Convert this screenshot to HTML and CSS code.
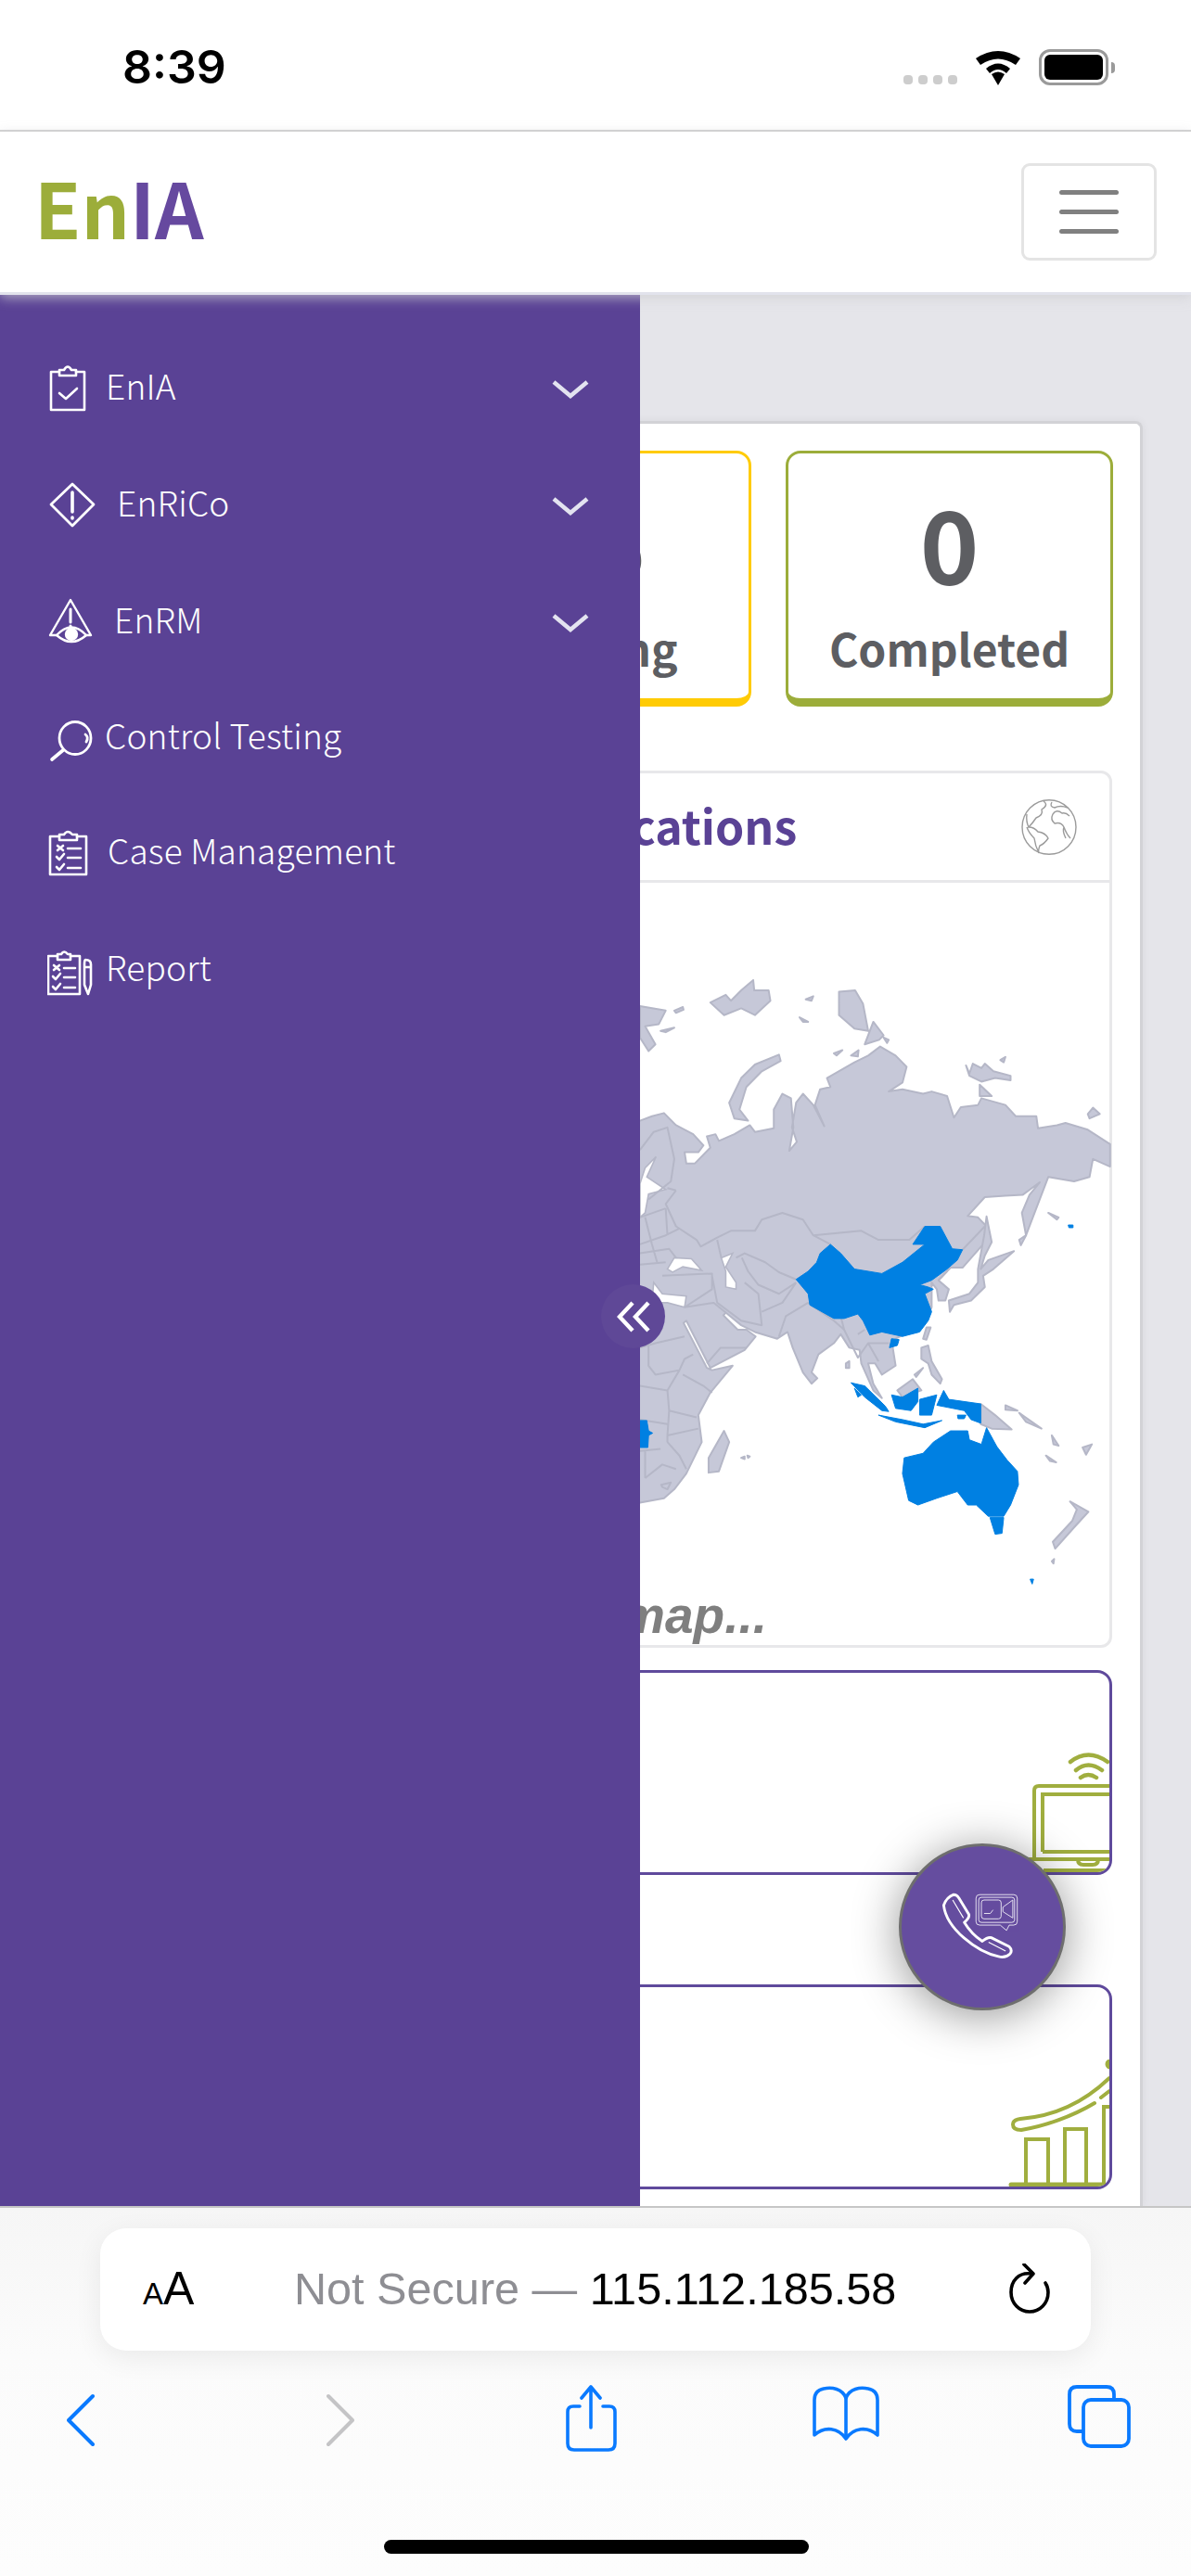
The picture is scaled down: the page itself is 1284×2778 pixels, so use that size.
FILE: index.html
```html
<!DOCTYPE html>
<html lang="en">
<head>
  <meta charset="UTF-8" />
  <title>EnIA</title>
  <meta name="viewport" content="width=device-width, initial-scale=1.0"/>
  <link rel="stylesheet" href="styles.css">
</head>
<body>

<div id="screen">

  <!-- ios status bar -->
  <div class="status-bar">
    <span class="clock">8:39</span>
    <div class="status-icons">
      <div class="signal"><i></i><i></i><i></i><i></i></div>
      <svg class="wifi" width="50" height="38" viewBox="0 0 50 38">
        <path d="M25 38 L18 26 Q25 21 32 26 Z" fill="#000"/>
        <path d="M12 20 Q25 9 38 20 L34 25 Q25 17 16 25 Z" fill="#000"/>
        <path d="M1 9 Q25 -7 49 9 L44 16 Q25 3 6 16 Z" fill="#000"/>
      </svg>
      <div class="battery"><div class="battery-fill"></div></div>
      <div class="battery-nub"></div>
    </div>
  </div>

  <header class="topbar">
    <div class="logo"><span class="logo-en">En</span><span class="logo-ia">IA</span></div>
    <button class="menu-btn"><i></i><i></i><i></i></button>
  </header>

  <main class="page">
    <div class="card">
      <div class="tiles">
        <div class="tile tile-purple"></div>
        <div class="tile tile-yellow"><div class="tile-num">35</div><div class="tile-label">Pending</div></div>
        <div class="tile tile-green"><div class="tile-num">0</div><div class="tile-label">Completed</div></div>
      </div>

      <div class="map-panel">
        <div class="map-head">
          <span class="map-title">Locations</span>
          <svg class="globe" width="60" height="60" viewBox="0 0 60 60" fill="none" stroke="#9b9b9b" stroke-width="1.4">
            <ellipse cx="30" cy="30" rx="29" ry="29.3"/>
            <path d="M24 2 Q30 6 22 11 Q24 17 16 20 Q12 26 8 30 Q14 30 18 35 Q26 36 29 42 Q25 48 20 50 Q18 55 19 58 Q15 50 14 42 Q8 36 6 30 M8 30 Q5 24 6 16"/>
            <path d="M33 3 Q30 8 36 9 Q42 6 50 9 M34 16 Q38 10 44 15 Q48 14 52 18 M34 16 Q31 22 36 26 Q43 24 46 30 Q49 38 53 42 M46 30 Q44 34 48 42"/>
          </svg>
        </div>
        <div class="map-body">
          <svg class="map" width="1131" height="760" viewBox="67 950 1131 760">
            <g transform="translate(640 1020) scale(.36995 .4847)">
              <!-- eurasia and africa -->
              <path class="land" d="M60 385 L135 385 L170 375 L205 368 L240 395 L290 415 L320 440 L305 455 L265 455 L270 480 L295 480 L340 445 L330 420 L355 415 L365 430 L410 415 L455 395 L470 410 L525 402 L525 360 L550 325 L575 335 L582 400 L570 452 L592 432 L578 400 L590 345 L610 325 L640 350 L672 397 L645 350 L660 315 L690 310 L680 290 L760 255 L800 240 L835 220 L880 240 L912 265 L900 300 L860 320 L900 315 L960 325 L985 320 L1030 330 L1050 378 L1070 355 L1120 350 L1130 335 L1200 350 L1230 375 L1290 375 L1295 402 L1350 395 L1375 390 L1440 405 L1505 437 L1505 487 L1455 470 L1445 510 L1400 520 L1325 510 L1300 560 L1260 640 L1248 590 L1270 550 L1300 522 L1250 550 L1200 552 L1140 555 L1090 597 L1120 600 L1145 620 L1135 660 L1075 712 L1040 712 L1005 740 L1035 760 L1025 785 L1005 785 L1000 760 L985 745 L985 800 L960 840 L880 870 L870 882 L880 930 L840 950 L820 925 L800 925 L815 970 L840 1002 L815 985 L780 925 L775 895 L745 890 L720 860 L700 880 L655 905 L635 945 L652 958 L635 970 L610 945 L580 890 L565 855 L535 870 L470 855 L430 840 L385 812 L378 818 L420 850 L445 850 L472 865 L440 895 L340 935 L270 830 L262 835 L330 935 L345 940 L405 930 L340 990 L305 1040 L315 1100 L270 1170 L235 1205 L205 1225 L135 1235 L60 1235 Z"/>
              <!-- seas -->
              <path class="sea" d="M215 715 L235 690 L285 692 L315 718 L260 710 L230 722 Z"/>
              <path class="sea" d="M372 690 L405 680 L385 710 L415 745 L415 760 L385 755 L385 720 Z"/>
              <path class="sea" d="M175 745 L200 770 L270 775 L265 800 L215 790 L170 790 Z"/>
              <path class="sea" d="M135 525 L150 490 L182 465 L155 510 L210 538 L160 548 L150 590 L135 600 Z"/>
              <path class="line" d="M240 540 L210 570 L240 620 L300 650 L312 665 L360 645 L400 630 L470 630 L490 605 L550 590 L610 605 L640 640 L690 660 M640 640 L780 630 L830 650 L920 650 L965 620 M1075 672 L1140 620 M360 650 L372 690 M415 690 L440 680 L500 700 L540 722 L590 738 M432 690 L450 720 L480 750 L540 770 L590 745 M345 730 L360 790 L430 830 L490 840 L480 770 L440 745 M490 810 L550 790 L590 745 M540 865 L560 820 L625 790 M625 790 L700 830 L730 850 L720 820 M730 850 L770 912 L800 880 L860 880 M800 880 L830 920 M770 860 L790 850 M1005 740 L1030 720 M200 730 L345 725 L345 760 L265 800 M265 800 L350 790 L385 812 M330 925 L370 890 L445 890"/>
              <path class="line" d="M135 450 L175 410 L215 400 L235 470 L225 520 L160 560 M215 535 L240 540 M135 600 L210 580 M150 600 L170 660 M135 660 L210 640 L250 625 M135 680 L220 670 L240 690 M135 705 L210 700 M170 660 L185 700 M210 580 L215 640"/>
              <path class="line" d="M135 890 L180 880 L265 865 M160 880 L160 930 L180 950 L250 940 L265 915 L290 905 M260 950 L320 975 L345 990 M215 985 L220 1030 L300 1045 M135 975 L215 985 M250 940 L215 985 M220 1030 L215 1085 L305 1070 M135 1050 L215 1060 M215 1100 L250 1130 L270 1160 M135 1120 L195 1115 M150 1180 L200 1150 L240 1160 M215 1085 L215 1100 M150 1120 L150 1180 M197 1195 L225 1190 L215 1205 L200 1200 Z"/>

              <!-- islands -->
              <path class="land" d="M395 345 L430 290 L470 260 L540 238 L545 252 L490 275 L445 310 L425 360 L450 385 L410 380 Z"/>
              <path class="land" d="M340 122 L385 105 L400 118 L430 95 L465 72 L468 95 L510 95 L515 118 L470 150 L430 135 L380 150 Z"/>
              <path class="land" d="M135 130 L210 140 L190 170 L150 175 L180 215 L160 230 L135 200 Z M235 140 L260 132 L262 138 L240 145 Z M195 185 L235 178 L210 188 Z"/>
              <path class="land" d="M715 98 L762 95 L785 125 L800 185 L760 180 L715 150 Z M790 215 L815 165 L845 195 L832 205 Z M845 200 L860 205 L855 212 Z M700 235 L725 228 L708 240 Z M750 240 L772 228 L770 242 Z M618 115 L640 108 L635 118 Z M600 155 L625 165 L610 165 Z"/>
              <path class="land" d="M1085 262 L1095 280 L1105 258 L1130 268 L1140 258 L1165 275 L1215 285 L1215 295 L1170 290 L1130 298 L1095 285 Z M1125 305 L1160 330 L1125 330 Z M1185 250 L1200 243 L1195 255 Z M1440 370 L1455 356 L1475 370 L1445 380 Z"/>
              <path class="land" d="M1138 640 L1145 598 L1160 655 L1140 685 L1128 715 L1150 695 L1225 675 L1165 715 L1135 730 L1140 755 L1100 785 L1050 795 L1038 810 L1035 785 L1095 770 L1120 745 L1120 715 Z"/>
              <path class="land" d="M1240 650 L1260 640 L1245 662 Z M1325 590 L1355 600 L1350 605 Z M960 870 L970 845 L982 845 L970 872 Z M955 890 L975 885 L985 920 L1015 960 L1010 970 L985 950 L975 925 L955 915 Z M935 950 L960 935 L940 955 Z"/>
              <path class="land" d="M735 925 L745 920 L745 935 L735 935 Z M335 1135 L380 1075 L395 1100 L365 1165 L335 1168 Z M430 1135 L440 1132 L440 1138 Z M448 1130 L455 1132 L450 1135 Z"/>
              <path class="land" d="M1128 1015 L1170 1040 L1218 1072 L1160 1070 L1128 1060 Z M1200 1018 L1235 1030 L1200 1028 Z M1240 1035 L1305 1070 L1260 1055 Z M1335 1085 L1355 1108 L1340 1105 Z M1318 1130 L1348 1145 L1330 1142 Z M1425 1112 L1452 1105 L1435 1128 Z M885 985 L930 960 L955 985 L900 1000 Z"/>
              <path class="land" d="M1388 1232 L1442 1255 L1400 1290 L1345 1337 L1338 1322 L1395 1275 L1408 1250 Z M1335 1365 L1342 1360 L1340 1370 Z"/>

              <!-- highlighted countries -->
              <path class="hit" d="M590 738 L625 720 L650 700 L660 680 L690 660 L720 680 L760 715 L840 725 L900 700 L965 660 L930 660 L965 620 L1010 620 L1045 670 L1075 672 L1060 695 L1030 715 L985 740 L950 750 L975 755 L990 760 L965 770 L985 810 L975 830 L950 855 L900 865 L870 860 L840 855 L805 862 L785 830 L770 815 L730 825 L700 825 L630 795 L625 770 Z"/>
              <path class="hit" d="M862 890 L868 870 L890 872 L885 885 Z M750 968 L790 975 L850 1020 L860 1032 L840 1030 L790 1000 Z M830 1040 L900 1050 L960 1060 L1015 1052 L965 1068 L880 1055 Z M868 995 L900 1000 L945 980 L945 1010 L925 1030 L880 1025 Z M950 1005 L1000 995 L985 1040 L950 1040 Z M1020 985 L1035 1005 L1128 1015 L1128 1058 L1100 1050 L1080 1030 L1000 1018 Z M1060 1040 L1085 1040 L1080 1048 L1062 1048 Z M760 980 L780 995 L770 1000 Z"/>
              <path class="hit" d="M905 1135 L960 1125 L990 1100 L1040 1075 L1090 1075 L1095 1095 L1130 1105 L1145 1068 L1175 1110 L1205 1140 L1235 1165 L1238 1195 L1215 1240 L1195 1265 L1150 1265 L1115 1240 L1090 1240 L1060 1210 L1000 1225 L945 1240 L918 1230 L900 1170 Z M1155 1268 L1195 1268 L1190 1303 L1170 1305 Z"/>
              <path class="hit" d="M100 1052 L155 1052 L160 1075 L172 1080 L160 1085 L158 1112 L100 1112 Z M1383 617 L1397 617 L1397 623 L1385 623 Z M1272 1405 L1282 1405 L1278 1416 Z"/>
            </g>
          </svg>
          <div class="map-loading">Loading map...</div>
        </div>
      </div>

      <div class="stat-card stat-first">
        <svg width="91" height="158" viewBox="1105 1860 91 158" fill="none" stroke="#a0ae3f" stroke-width="4">
          <path d="M1154 1899 Q1173 1884 1194 1899 M1160 1908 Q1173 1897 1188 1908 M1165 1916 Q1173 1910 1182 1916" stroke-linecap="round" stroke-width="4.5"/>
          <path d="M1115 2003 L1115 1930 Q1115 1925 1120 1925 L1196 1925"/>
          <path d="M1124 1996 L1124 1934 L1196 1934 M1124 1996 L1196 1996"/>
          <path d="M1107 2004 L1196 2004 M1162 2004 Q1162 2010 1168 2010 L1178 2010 Q1184 2010 1184 2004"/>
          <path d="M1125 2016 L1196 2016"/>
        </svg>
      </div>

      <div class="stat-card stat-second">
        <svg width="111" height="137" viewBox="1085 2220 111 137" fill="none" stroke="#a0ae3f" stroke-width="4">
          <path d="M1180 2267 C1155 2282 1125 2292 1101 2296 Q1092 2296 1092 2290 Q1092 2285 1100 2284 C1140 2281 1170 2265 1196 2240" stroke-linecap="round"/>
          <path d="M1187 2261 L1196 2254" stroke-linecap="round"/>
          <circle cx="1197" cy="2225" r="3.5" fill="#a0ae3f"/>
          <path d="M1106 2355 L1106 2306 L1130 2306 L1130 2355 M1148 2355 L1148 2295 L1171 2295 L1171 2355 M1190 2355 L1190 2271 L1196 2271"/>
          <path d="M1090 2355 L1190 2355" stroke-width="5" stroke-linecap="round"/>
        </svg>
      </div>
    </div>
  </main>

  <!-- safari bottom bar -->
  <div class="browser-bar">
    <div class="url-pill">
      <span class="aa"><small>A</small>A</span>
      <span class="url"><span class="url-muted">Not Secure — </span>115.112.185.58</span>
      <svg class="reload" width="44" height="54" viewBox="0 0 44 54" fill="none" stroke="#000" stroke-width="3.6" stroke-linecap="round" stroke-linejoin="round">
        <path d="M24 11 C10 9 2 19 2 31 C2 43 11 52 22 52 C33 52 42 43 42 31 C42 27 41 24 39 21"/>
        <path d="M16 1 L26 11 L17 21"/>
      </svg>
    </div>
    <div class="toolbar">
      <svg width="30" height="72" viewBox="72 2572 30 72" fill="none" stroke="#0a7aff" stroke-width="4" stroke-linecap="round" stroke-linejoin="round">
        <path d="M100 2584 L74 2610 L100 2636"/>
      </svg>
      <svg width="30" height="72" viewBox="352 2572 30 72" fill="none" stroke="#c4c4c6" stroke-width="4" stroke-linecap="round" stroke-linejoin="round">
        <path d="M354 2584 L380 2610 L354 2636"/>
      </svg>
      <svg width="56" height="72" viewBox="610 2572 56 72" fill="none" stroke="#0a7aff" stroke-width="3.6" stroke-linecap="round" stroke-linejoin="round">
        <path d="M625 2595 L618 2595 Q612 2595 612 2601 L612 2635 Q612 2642 619 2642 L656 2642 Q663 2642 663 2635 L663 2601 Q663 2595 657 2595 L650 2595"/>
        <path d="M637 2618 L637 2574 M627 2586 L637 2574 L647 2586"/>
      </svg>
      <svg width="72" height="60" viewBox="875 2580 72 60" fill="none" stroke="#0a7aff" stroke-width="3.6" stroke-linejoin="round">
        <path d="M911 2594 C907 2584 896 2582 887 2584 Q877 2586 877 2596 L877 2634 C888 2624 903 2626 911 2638 C919 2626 934 2624 945 2634 L945 2596 Q945 2586 935 2584 C926 2582 915 2584 911 2594 Z"/>
        <path d="M911 2594 L911 2638"/>
      </svg>
      <svg width="68" height="68" viewBox="1150 2576 68 68" fill="none" stroke="#0a7aff" stroke-width="3.8" stroke-linejoin="round">
        <path d="M1167 2626 L1160 2626 Q1152 2626 1152 2618 L1152 2586 Q1152 2578 1160 2578 L1192 2578 Q1200 2578 1200 2586 L1200 2592"/>
        <rect x="1167" y="2592" width="49" height="50" rx="8"/>
      </svg>
    </div>
    <div class="home-indicator"></div>
  </div>

  <!-- menu lying over the page -->
  <nav class="sidebar">
    <a class="nav-row">
      <svg width="63" height="60" viewBox="51 388 63 60" fill="none" stroke="#fff" stroke-width="2.6" stroke-linejoin="round" stroke-linecap="round">
        <path d="M64 401 L55 401 L55 442 L91 442 L91 401 L82 401"/>
        <path d="M64 405 L64 399 L69 399 Q73 392 77 399 L82 399 L82 405 Z"/>
        <path d="M64 424 L71 430 L83 419"/>
      </svg>
      <span>EnIA</span>
      <svg class="chev" width="40" height="20" viewBox="0 0 40 20" fill="none" stroke="#e3e3f0" stroke-width="4.6"><path d="M2 2 L20 17 L38 2"/></svg>
    </a>
    <a class="nav-row">
      <svg width="75" height="60" viewBox="51 514 75 60" fill="none" stroke="#fff" stroke-width="2.8" stroke-linejoin="round" stroke-linecap="round">
        <path d="M78 522 L101 544 L78 567 L55 544 Z"/>
        <path d="M78 531 L78 552 M78 558 L78 559" stroke-width="3.6"/>
      </svg>
      <span>EnRiCo</span>
      <svg class="chev" width="40" height="20" viewBox="0 0 40 20" fill="none" stroke="#e3e3f0" stroke-width="4.6"><path d="M2 2 L20 17 L38 2"/></svg>
    </a>
    <a class="nav-row">
      <svg width="72" height="60" viewBox="51 640 72 60" fill="none" stroke="#fff" stroke-width="2.4" stroke-linejoin="round" stroke-linecap="round">
        <path d="M76 647 L98 685 L54 685 Z"/>
        <path d="M76 657 L76 671 M76 675 L76 677" stroke-width="3"/>
        <path d="M61 685 Q77 668 93 685 Q77 699 61 685 Z" fill="#5a4295"/>
        <circle cx="77" cy="684" r="6" fill="#fff"/>
      </svg>
      <span>EnRM</span>
      <svg class="chev" width="40" height="20" viewBox="0 0 40 20" fill="none" stroke="#e3e3f0" stroke-width="4.6"><path d="M2 2 L20 17 L38 2"/></svg>
    </a>
    <a class="nav-row nav-row-short">
      <svg width="62" height="60" viewBox="51 765 62 60" fill="none" stroke="#fff" stroke-width="2.8" stroke-linecap="round">
        <ellipse cx="81" cy="796" rx="17" ry="17.5"/>
        <path d="M56 819 L68 809" stroke-width="3.6"/>
        <path d="M92 792 Q96 795 93 800"/>
      </svg>
      <span>Control Testing</span>
    </a>
    <a class="nav-row nav-row-short">
      <svg width="65" height="60" viewBox="51 889 65 60" fill="none" stroke="#fff" stroke-width="2.6" stroke-linejoin="round" stroke-linecap="round">
        <path d="M64 902 L54 902 L54 943 L93 943 L93 902 L83 902"/>
        <path d="M64 906 L64 900 L69 900 Q73 894 78 900 L83 900 L83 906 Z"/>
        <path d="M62 912 L68 917 M68 912 L62 917 M61 924 L64 927 L69 921 M61 935 L64 938 L69 932"/>
        <path d="M73 915 L87 915 M73 925 L87 925 M73 936 L87 936"/>
      </svg>
      <span>Case Management</span>
    </a>
    <a class="nav-row nav-row-tall">
      <svg width="63" height="60" viewBox="51 1015 63 60" fill="none" stroke="#fff" stroke-width="2.6" stroke-linejoin="round" stroke-linecap="round">
        <path d="M62 1031 L52 1031 L52 1072 L86 1072 L86 1031 L76 1031"/>
        <path d="M62 1035 L62 1029 L66 1029 Q69 1024 73 1029 L76 1029 L76 1035 Z"/>
        <path d="M58 1041 L64 1046 M64 1041 L58 1046 M57 1053 L60 1056 L65 1050 M57 1064 L60 1067 L65 1061"/>
        <path d="M69 1044 L81 1044 M69 1054 L81 1054 M69 1065 L81 1065"/>
        <path d="M92 1035 Q98 1035 98 1040 L98 1062 L95 1072 L91 1062 L91 1040 Q91 1035 92 1035 Z M91 1043 L98 1043"/>
      </svg>
      <span>Report</span>
    </a>
  </nav>

  <button class="collapse-btn">
    <svg width="36" height="34" viewBox="0 0 36 34" fill="none" stroke="#fff" stroke-width="4.4">
      <path d="M17 2 L3 17 L17 32 M34 2 L20 17 L34 32"/>
    </svg>
  </button>

  <button class="call-btn">
    <svg width="180" height="180" viewBox="0 0 180 180" fill="none" stroke="#fff">
      <path d="M47 66 Q50 57 58 54 Q62 54 64 58 L75 76 Q76 80 70 85 Q78 98 90 106 Q96 101 100 102 L120 112 Q124 116 121 120 Q116 125 108 123 C84 118 50 92 47 66 Z" stroke-width="3" stroke-linejoin="round"/>
      <path d="M57 60 L69 80 M97 107 L116 117" stroke-width="1.2"/>
      <g class="call-video" stroke-width="1">
        <path d="M87 54 L125 54 Q129 54 129 58 L129 84 Q129 88 125 88 L120 88 L117 94 L110 88 L87 88 Q83 88 83 84 L83 58 Q83 54 87 54 Z"/>
        <rect x="86" y="57" width="40" height="28" rx="3"/>
        <rect x="89" y="60" width="22" height="21" rx="3"/>
        <path d="M113 68 L124 60 L124 80 L113 73 Z M92 75 L99 75 L102 71"/>
      </g>
    </svg>
  </button>
</div>

</body>
</html>
```

FILE: styles.css
```css
html, body {
  margin: 0;
  padding: 0;
}

body {
  font-family: "Noto Sans CJK SC", "Liberation Sans", sans-serif;
  background-color: #fff;
}

#screen {
  position: relative;
  width: 1284px;
  height: 2778px;
  display: flex;
  flex-direction: column;
  overflow: hidden;
}

/* status bar */
.status-bar {
  height: 142px;
  flex: none;
  box-sizing: border-box;
  display: flex;
  justify-content: space-between;
  padding: 41px 82px 0 132px;
  border-bottom: 2px solid #d2d2d2;
  background-color: #fff;
}

.clock {
  font-family: Inter, sans-serif;
  font-weight: 600;
  font-size: 50px;
  line-height: 62px;
  color: #000;
}

.status-icons {
  display: flex;
  align-items: flex-start;
  padding-top: 12px;
}

.signal {
  display: flex;
  gap: 6px;
  margin-top: 28px;
  margin-right: 19px;
}

.signal i {
  width: 10px;
  height: 10px;
  border-radius: 4px;
  background-color: #cdcdcd;
}

.wifi {
  margin-top: 1px;
  margin-right: 19px;
}

.battery {
  box-sizing: border-box;
  width: 75px;
  height: 39px;
  border: 3px solid #9a9a9a;
  border-radius: 12px;
  padding: 3px;
}

.battery-fill {
  height: 100%;
  background-color: #000;
  border-radius: 6px;
}

.battery-nub {
  width: 4px;
  height: 12px;
  margin: 14px 0 0 3px;
  background-color: #9a9a9a;
  border-radius: 0 4px 4px 0;
}

/* header */
.topbar {
  position: relative;
  z-index: 3;
  height: 176px;
  flex: none;
  box-sizing: border-box;
  display: flex;
  justify-content: space-between;
  align-items: flex-start;
  padding: 34px 37px 0 37px;
  background-color: #fff;
  border-bottom: 3px solid #e2e3ec;
  box-shadow: 0 3px 12px rgba(205, 205, 210, 0.75);
}

.logo {
  font-size: 82px;
  font-weight: 700;
  line-height: 94px;
}

.logo-en { color: #9cad3a; }
.logo-ia { color: #66499f; }

.menu-btn {
  box-sizing: border-box;
  width: 146px;
  height: 105px;
  padding: 0;
  background-color: #fff;
  border: 3px solid #e4e4e4;
  border-radius: 9px;
  display: flex;
  flex-direction: column;
  justify-content: center;
  align-items: center;
  gap: 16px;
}

.menu-btn i {
  width: 64px;
  height: 5px;
  border-radius: 3px;
  background-color: #808080;
}

/* page behind the menu */
.page {
  flex: 1;
  min-height: 0;
  overflow: hidden;
  box-sizing: border-box;
  background-color: #e5e5ea;
  padding: 136px 52px 0 34px;
}

.card {
  box-sizing: border-box;
  height: 100%;
  background-color: #fff;
  border: 3px solid #d2d2d6;
  border-bottom: none;
  border-radius: 8px 8px 0 0;
  box-shadow: 0 0 10px rgba(0, 0, 0, 0.06);
  padding: 29px 30px 0 30px;
}

.tiles {
  display: grid;
  grid-template-columns: repeat(3, 353px);
  gap: 37px;
}

.tile {
  box-sizing: border-box;
  height: 276px;
  border: 3px solid;
  border-bottom-width: 9px;
  border-radius: 16px;
  text-align: center;
  color: #5d5e62;
  font-weight: 700;
}

.tile-purple { border-color: #5a4295; }
.tile-yellow { border-color: #ffcb05; }
.tile-green { border-color: #9cad3a; }

.tile-num {
  font-size: 108px;
  line-height: 150px;
  margin-top: 19px;
}

.tile-label {
  font-size: 48px;
  line-height: 64px;
  margin-top: 8px;
}

/* map panel */
.map-panel {
  box-sizing: border-box;
  height: 946px;
  margin-top: 69px;
  border: 3px solid #e8e8ea;
  border-radius: 12px;
}

.map-head {
  box-sizing: border-box;
  height: 118px;
  display: flex;
  justify-content: space-between;
  align-items: center;
  padding: 0 35px 6px 551px;
  border-bottom: 3px solid #e8e8ea;
}

.map-title {
  font-size: 50px;
  font-weight: 700;
  color: #5a4295;
}

.globe {
  margin-top: 6px;
}

.map-body {
  display: block;
}

.map {
  display: block;
  margin-left: -3px;
}

.map path {
  vector-effect: non-scaling-stroke;
}

.land {
  fill: #c6c8d8;
  stroke: #b5b7c7;
  stroke-width: 2;
  stroke-linejoin: round;
}

.sea {
  fill: #fff;
  stroke: #b5b7c7;
  stroke-width: 1.6;
}

.line {
  fill: none;
  stroke: #b5b7c7;
  stroke-width: 2;
  stroke-linejoin: round;
}

.hit {
  fill: #0080e2;
  stroke: #0080e2;
  stroke-width: 1;
}

.map-loading {
  font-family: "Liberation Sans", sans-serif;
  font-size: 55px;
  font-weight: 700;
  font-style: italic;
  line-height: 60px;
  text-align: center;
  color: #7f7f7f;
}

/* cards at the bottom of the page */
.stat-card {
  box-sizing: border-box;
  height: 221px;
  border: 3px solid #5f4a9c;
  border-radius: 16px;
  overflow: hidden;
  display: flex;
  justify-content: flex-end;
  align-items: flex-end;
}

.stat-first { margin-top: 24px; }
.stat-second { margin-top: 118px; }

/* safari bar */
.browser-bar {
  position: relative;
  z-index: 4;
  height: 399px;
  flex: none;
  box-sizing: border-box;
  padding-top: 22px;
  border-top: 2px solid #c6c6c6;
  background: linear-gradient(#f6f6f6, #fbfbfb 40%, #fdfdfd);
}

.url-pill {
  box-sizing: border-box;
  width: 1068px;
  height: 132px;
  margin-left: 108px;
  display: flex;
  align-items: center;
  padding: 0 44px 2px 46px;
  background-color: #fff;
  border-radius: 28px;
  box-shadow: 0 8px 30px rgba(0, 0, 0, 0.07);
  font-family: "Liberation Sans", sans-serif;
  color: #000;
}

.aa {
  width: 163px;
  flex: none;
  font-size: 50px;
}

.aa small {
  font-size: 33px;
}

.url {
  flex: 1;
  font-size: 48.6px;
  white-space: nowrap;
}

.url-muted {
  color: #8e8e93;
}

.toolbar {
  display: grid;
  grid-template-columns: 280px 258px 266px 275px auto;
  justify-content: start;
  align-items: start;
  padding: 37px 0 0 72px;
  height: 72px;
}

.toolbar svg {
  display: block;
}

.home-indicator {
  width: 458px;
  height: 15px;
  margin: 95px 0 0 414px;
  background-color: #000;
  border-radius: 8px;
}

/* slide-out menu */
.sidebar {
  position: absolute;
  z-index: 2;
  top: 318px;
  left: 0;
  bottom: 399px;
  width: 690px;
  box-sizing: border-box;
  padding-top: 37px;
  background-color: #5a4295;
}

.nav-row {
  height: 126px;
  display: flex;
  align-items: center;
  padding: 0 55px 0 51px;
  color: #fff;
  font-size: 37px;
  font-weight: 300;
  letter-spacing: 0.2px;
}

.nav-row-short {
  height: 124px;
}

.nav-row-tall {
  height: 128px;
}

.nav-row span {
  flex: 1;
  padding-bottom: 6px;
}

.chev {
  margin-top: 3px;
}

.collapse-btn {
  position: absolute;
  z-index: 2;
  top: 1385px;
  left: 648px;
  width: 69px;
  height: 69px;
  padding: 0;
  border: none;
  border-radius: 50%;
  background-color: #5f4897;
  display: flex;
  justify-content: center;
  align-items: center;
}

.call-btn {
  position: absolute;
  z-index: 2;
  top: 1988px;
  left: 969px;
  width: 180px;
  height: 180px;
  padding: 0;
  box-sizing: border-box;
  border: 3px solid #6e6e6e;
  border-radius: 50%;
  background-color: #654d9f;
  box-shadow: 0 6px 50px rgba(0, 0, 0, 0.42);
  display: flex;
  justify-content: center;
  align-items: center;
  overflow: hidden;
}

.call-video {
  opacity: 0.85;
}
```
